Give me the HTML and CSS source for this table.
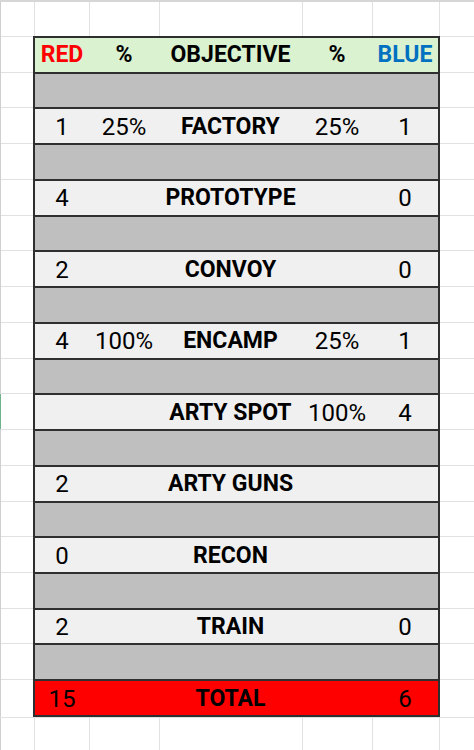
FILE: index.html
```html
<!DOCTYPE html>
<html>
<head>
<meta charset="utf-8">
<link rel="stylesheet" href="styles.css">
</head>
<body>
<div class="sheet">
  <div class="blank-row top">
    <div class="cell edge"></div><div class="cell"></div><div class="cell"></div><div class="cell"></div><div class="cell"></div><div class="cell"></div><div class="cell"></div>
  </div>
  <div class="mid">
    <div class="side left">
      <div class="scell"></div><div class="scell"></div><div class="scell"></div><div class="scell"></div><div class="scell"></div><div class="scell"></div><div class="scell"></div><div class="scell"></div><div class="scell"></div><div class="scell"></div><div class="scell sel"></div><div class="scell"></div><div class="scell"></div><div class="scell"></div><div class="scell"></div><div class="scell"></div><div class="scell"></div><div class="scell"></div><div class="scell"></div>
    </div>
    <div class="table">
      <div class="row head">
        <div class="lbl red">RED</div><div class="lbl">%</div><div class="lbl">OBJECTIVE</div><div class="lbl">%</div><div class="lbl blue">BLUE</div>
      </div>
      <div class="row gap"></div>
      <div class="row data">
        <div class="num">1</div><div class="num">25%</div><div class="lbl">FACTORY</div><div class="num">25%</div><div class="num">1</div>
      </div>
      <div class="row gap"></div>
      <div class="row data">
        <div class="num">4</div><div class="num"></div><div class="lbl">PROTOTYPE</div><div class="num"></div><div class="num">0</div>
      </div>
      <div class="row gap"></div>
      <div class="row data">
        <div class="num">2</div><div class="num"></div><div class="lbl">CONVOY</div><div class="num"></div><div class="num">0</div>
      </div>
      <div class="row gap"></div>
      <div class="row data">
        <div class="num">4</div><div class="num">100%</div><div class="lbl">ENCAMP</div><div class="num">25%</div><div class="num">1</div>
      </div>
      <div class="row gap"></div>
      <div class="row data">
        <div class="num"></div><div class="num"></div><div class="lbl">ARTY SPOT</div><div class="num">100%</div><div class="num">4</div>
      </div>
      <div class="row gap"></div>
      <div class="row data">
        <div class="num">2</div><div class="num"></div><div class="lbl">ARTY GUNS</div><div class="num"></div><div class="num"></div>
      </div>
      <div class="row gap"></div>
      <div class="row data">
        <div class="num">0</div><div class="num"></div><div class="lbl">RECON</div><div class="num"></div><div class="num"></div>
      </div>
      <div class="row gap"></div>
      <div class="row data">
        <div class="num">2</div><div class="num"></div><div class="lbl">TRAIN</div><div class="num"></div><div class="num">0</div>
      </div>
      <div class="row gap"></div>
      <div class="row total">
        <div class="num">15</div><div class="num"></div><div class="lbl">TOTAL</div><div class="num"></div><div class="num">6</div>
      </div>
    </div>
    <div class="side right">
      <div class="scell"></div><div class="scell"></div><div class="scell"></div><div class="scell"></div><div class="scell"></div><div class="scell"></div><div class="scell"></div><div class="scell"></div><div class="scell"></div><div class="scell"></div><div class="scell"></div><div class="scell"></div><div class="scell"></div><div class="scell"></div><div class="scell"></div><div class="scell"></div><div class="scell"></div><div class="scell"></div><div class="scell"></div>
    </div>
  </div>
  <div class="blank-row bottom">
    <div class="cell edge"></div><div class="cell"></div><div class="cell"></div><div class="cell"></div><div class="cell"></div><div class="cell"></div><div class="cell"></div>
  </div>
</div>
</body>
</html>
```
FILE: styles.css
```css
* { box-sizing: border-box; }
html, body { margin: 0; padding: 0; background: #ffffff; }
body { width: 474px; height: 750px; overflow: hidden; font-family: Roboto, "Liberation Sans", sans-serif; color: #000; }
.sheet { display: flex; flex-direction: column; width: 474px; }

.blank-row {
  display: grid;
  grid-template-columns: 34px 55px 70px 143px 70px 67px 35px;
}
.blank-row.top { height: 36px; border-top: 2px solid #d6d6d6; }
.blank-row.bottom { height: 34px; border-top: 1px solid #e1e1e1; }
.cell { border-left: 1px solid #e1e1e1; }
.cell.edge { border-left: 1px solid #cfcfcf; }

.mid { display: flex; }
.side { display: flex; flex-direction: column; }
.side.left { width: 33px; border-left: 1px solid #cfcfcf; }
.side.right { width: 34px; }
.scell { height: 35.74px; border-top: 1px solid #e1e1e1; }
.side.left .scell.sel { box-shadow: inset 1px 0 0 #6fb38c; margin-left: -1px; }

.table {
  width: 407px;
  border-left: 2px solid #2f2f2f;
  border-right: 2px solid #2f2f2f;
  border-bottom: 2px solid #2f2f2f;
}
.row {
  height: 35.74px;
  border-top: 2px solid #2f2f2f;
  padding-top: 1px;
  display: grid;
  grid-template-columns: 54px 70px 143px 70px 66px;
  align-items: center;
  text-align: center;
}
.row.head { background: #daf2d0; }
.row.gap { background: #bfbfbf; }
.row.data { background: #f0f0f0; }
.row.total { background: #ff0000; }

.lbl { font-weight: 700; font-size: 23px; line-height: 30px; white-space: nowrap; }
.num { font-weight: 400; font-size: 24px; line-height: 30px; white-space: nowrap; }
.red { color: #ff0000; }
.blue { color: #0070c0; }
```
